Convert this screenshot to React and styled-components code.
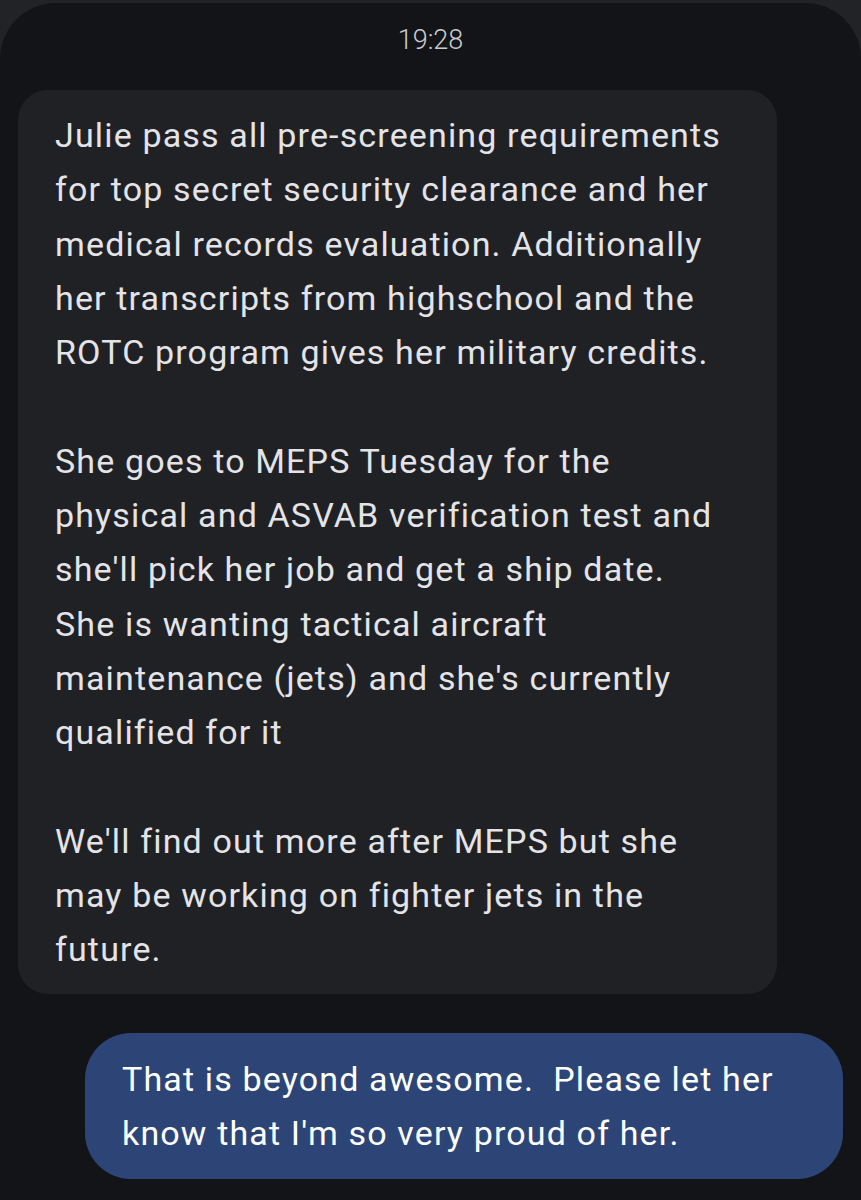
import React from "react";
import styled, { createGlobalStyle } from "styled-components";

const GlobalStyle = createGlobalStyle`
  html, body {
    margin: 0;
    padding: 0;
    background: #222327;
  }
  body {
    font-family: Roboto, "Open Sans", sans-serif;
    -webkit-font-smoothing: antialiased;
  }
`;

const incoming = [
  "Julie pass all pre-screening requirements",
  "for top secret security clearance and her",
  "medical records evaluation. Additionally",
  "her transcripts from highschool and the",
  "ROTC program gives her military credits.",
  "",
  "She goes to MEPS Tuesday for the",
  "physical and ASVAB verification test and",
  "she'll pick her job and get a ship date.",
  "She is wanting tactical aircraft",
  "maintenance (jets) and she's currently",
  "qualified for it",
  "",
  "We'll find out more after MEPS but she",
  "may be working on fighter jets in the",
  "future.",
];

const outgoing = [
  "That is beyond awesome.\u00a0 Please let her",
  "know that I'm so very proud of her.",
];

function App() {
  return (
    <>
      <GlobalStyle />
      <Screen>
        <Timestamp>19:28</Timestamp>
        <Thread>
          <Bubble>
            {incoming.map((line, i) => (
              <Line key={i}>{line || "\u00a0"}</Line>
            ))}
          </Bubble>
          <Bubble $mine>
            {outgoing.map((line, i) => (
              <Line key={i}>{line}</Line>
            ))}
          </Bubble>
        </Thread>
      </Screen>
    </>
  );
}

const Screen = styled.div`
  margin-top: 3px;
  min-height: 1197px;
  background: #131418;
  border-radius: 56px 56px 0 0;
  display: flex;
  flex-direction: column;
  align-items: center;
`;

const Timestamp = styled.div`
  margin-top: 21px;
  height: 32px;
  font-size: 27px;
  font-weight: 300;
  line-height: 32px;
  color: #c9cbd0;
`;

const Thread = styled.div`
  align-self: stretch;
  display: flex;
  flex-direction: column;
  gap: 39px;
  padding: 34px 18px 0 18px;
`;

const Bubble = styled.div`
  align-self: ${(p) => (p.$mine ? "flex-end" : "flex-start")};
  box-sizing: border-box;
  width: ${(p) => (p.$mine ? "758px" : "759px")};
  padding: ${(p) => (p.$mine ? "19px 20px 19px 37px" : "18px 20px 17px 37px")};
  background: ${(p) => (p.$mine ? "#2d4576" : "#202125")};
  color: ${(p) => (p.$mine ? "#ffffff" : "#e4e4e8")};
  border-radius: ${(p) => (p.$mine ? "46px" : "30px")};
  font-size: 34px;
  letter-spacing: 1.15px;
  line-height: 54.3px;
`;

const Line = styled.div`
  white-space: nowrap;
`;

export default App;
